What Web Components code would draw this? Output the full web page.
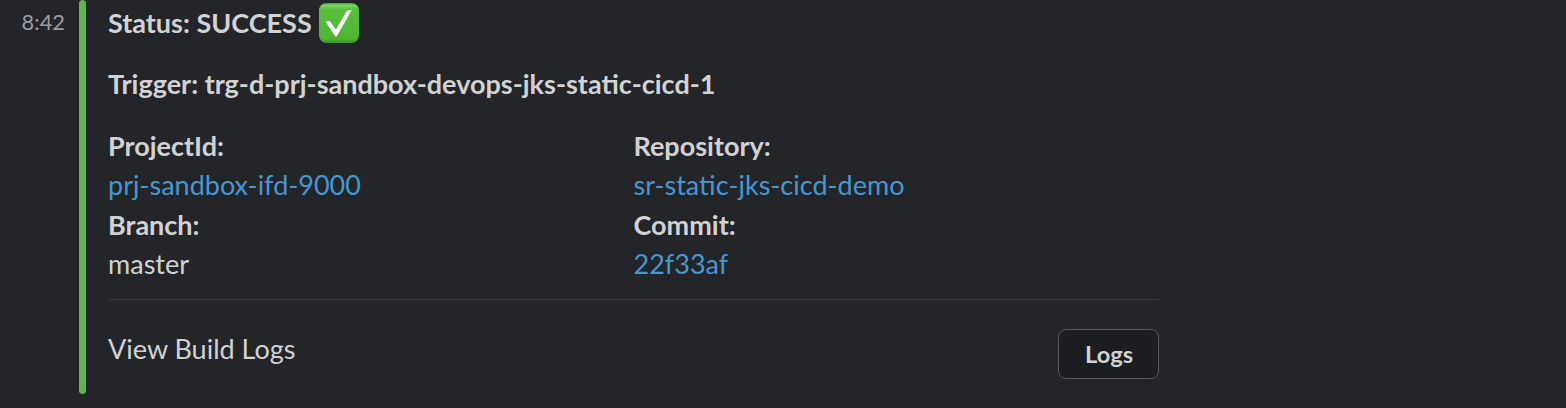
<!DOCTYPE html>
<html lang="en"><head><meta charset="utf-8"><title>Build status</title>
<style>body{margin:0;background:#242529;font-family:Lato,sans-serif;overflow:hidden}</style></head><body>
<slack-message time="8:42">
<status-line>Status: SUCCESS<check-mark slot="icon"></check-mark></status-line>
<trigger-line>Trigger: trg-d-prj-sandbox-devops-jks-static-cicd-1</trigger-line>
<field-grid>
<field-item label="ProjectId:" link>prj-sandbox-ifd-9000</field-item>
<field-item label="Repository:" link>sr-static-jks-cicd-demo</field-item>
<field-item label="Branch:">master</field-item>
<field-item label="Commit:" link>22f33af</field-item>
</field-grid>
<action-row>View Build Logs<log-button slot="action">Logs</log-button></action-row>
</slack-message>
<script>
function define(name, html){
  customElements.define(name, class extends HTMLElement{
    constructor(){
      super();
      this.attachShadow({mode:'open'}).innerHTML = html;
    }
    connectedCallback(){
      for (const el of this.shadowRoot.querySelectorAll('[data-attr]'))
        el.textContent = this.getAttribute(el.dataset.attr);
    }
  });
}
define('check-mark', `<style>:host{display:block;width:40px;height:40px}svg{display:block}</style>
<svg width="40" height="40" viewBox="0 0 40 40"><defs><linearGradient id="g" x1="0" y1="0" x2="0" y2="1"><stop offset="0" stop-color="#3fa52b"/><stop offset=".06" stop-color="#7ad662"/><stop offset=".16" stop-color="#58c03c"/><stop offset=".9" stop-color="#4fb432"/><stop offset="1" stop-color="#3c9426"/></linearGradient></defs>
<rect width="40" height="40" rx="7.5" fill="url(#g)"/>
<path d="M6.4 18.5L10.8 17.9L16.9 26.5L28 7.8L32.8 7.1L17.6 33.4H16.4Z" fill="#fff"/></svg>`);
define('status-line', `<style>:host{display:flex;align-items:center;gap:7px;height:46px;font-weight:700;white-space:nowrap}span{padding-bottom:2px}</style><span><slot></slot></span><slot name="icon"></slot>`);
define('trigger-line', `<style>:host{display:block;height:40px;line-height:40px;margin-top:18px;font-weight:700;white-space:nowrap}</style><slot></slot>`);
define('field-grid', `<style>:host{display:grid;grid-template-columns:525.5px 525.5px;margin-top:22px}</style><slot></slot>`);
define('field-item', `<style>:host{display:block;height:79px;line-height:39px}b{display:block}:host([link]) span{color:#4398d2}</style><b data-attr="label"></b><span><slot></slot></span>`);
define('action-row', `<style>:host{display:flex;justify-content:space-between;align-items:flex-start;border-top:1px solid #37383c;margin-top:15px;line-height:40px;padding-top:29px}</style><span><slot></slot></span><slot name="action"></slot>`);
define('log-button', `<style>:host{display:block}button{display:block;box-sizing:border-box;width:101px;height:50px;border:1px solid #56575b;border-radius:8px;background:#1b1d21;color:#d1d2d3;font:700 23.7px Lato,sans-serif;padding:0 0 1px 1px}</style><button><slot></slot></button>`);
define('slack-message', `<style>:host{display:flex;height:394px;font-size:27px;color:#d1d2d3}time{width:65px;box-sizing:border-box;text-align:right;font-size:21.8px;line-height:44px;color:#9c9da0}i{width:7px;margin-left:14px;background:#5bb947;border-radius:4px}main{width:1051px;margin-left:22px}</style><time data-attr="time"></time><i></i><main><slot></slot></main>`);
</script></body></html>
